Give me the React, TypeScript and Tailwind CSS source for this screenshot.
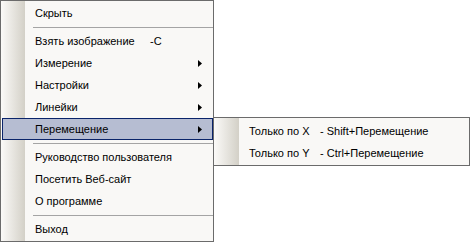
import React from "react";

type Item =
  | { kind: "sep" }
  | { kind: "item"; label: string; shortcut?: string; sub?: boolean; active?: boolean };

const items: Item[] = [
  { kind: "item", label: "Скрыть" },
  { kind: "sep" },
  { kind: "item", label: "Взять изображение", shortcut: "-C" },
  { kind: "item", label: "Измерение", sub: true },
  { kind: "item", label: "Настройки", sub: true },
  { kind: "item", label: "Линейки", sub: true },
  { kind: "item", label: "Перемещение", sub: true, active: true },
  { kind: "sep" },
  { kind: "item", label: "Руководство пользователя" },
  { kind: "item", label: "Посетить Веб-сайт" },
  { kind: "item", label: "О программе" },
  { kind: "sep" },
  { kind: "item", label: "Выход" },
];

const subItems = [
  { label: "Только по X", shortcut: "- Shift+Перемещение" },
  { label: "Только по Y", shortcut: "- Ctrl+Перемещение" },
];

function Arrow() {
  return (
    <svg width="4" height="7" viewBox="0 0 4 7" className="ml-auto mr-[10px] shrink-0">
      <path d="M0 0 L4 3.5 L0 7 Z" fill="#000" />
    </svg>
  );
}

export default function App() {
  return (
    <div className="relative w-[471px] h-[242px] bg-white font-['Liberation_Sans',Arial,sans-serif] text-[11px] text-black leading-none">
      {/* main context menu */}
      <div className="flex flex-col w-[214px] h-[242px] border border-[#6b6b6b] py-[1px] pl-[1px] bg-[linear-gradient(to_right,#fbfaf8_0px,#d3d0c7_24px,#f9f8f6_24px)]">
        {items.map((item, i) =>
          item.kind === "sep" ? (
            <div key={i} className="h-[6px] shrink-0 pl-[31px] pt-[3px]">
              <div className="h-px bg-[#a4a4a4]" />
            </div>
          ) : (
            <div
              key={i}
              className={
                "h-[22px] shrink-0 flex items-center border pl-[32px] " +
                (item.active ? "bg-[#b6bdd2] border-[#0a246a]" : "border-transparent")
              }
            >
              <span className="w-[115px] shrink-0 whitespace-nowrap">{item.label}</span>
              {item.shortcut && <span className="whitespace-nowrap">{item.shortcut}</span>}
              {item.sub && <Arrow />}
            </div>
          )
        )}
      </div>

      {/* submenu */}
      <div className="absolute left-[213px] top-[117px] w-[257px] h-[49px] flex flex-col border border-[#6b6b6b] pt-[2px] bg-[linear-gradient(to_right,#fbfaf8_0px,#d3d0c7_25px,#f9f8f6_25px)]">
        {subItems.map((s) => (
          <div key={s.label} className="h-[22px] shrink-0 flex items-center pl-[35px]">
            <span className="w-[71px] shrink-0 whitespace-nowrap">{s.label}</span>
            <span className="whitespace-nowrap">{s.shortcut}</span>
          </div>
        ))}
      </div>
    </div>
  );
}
